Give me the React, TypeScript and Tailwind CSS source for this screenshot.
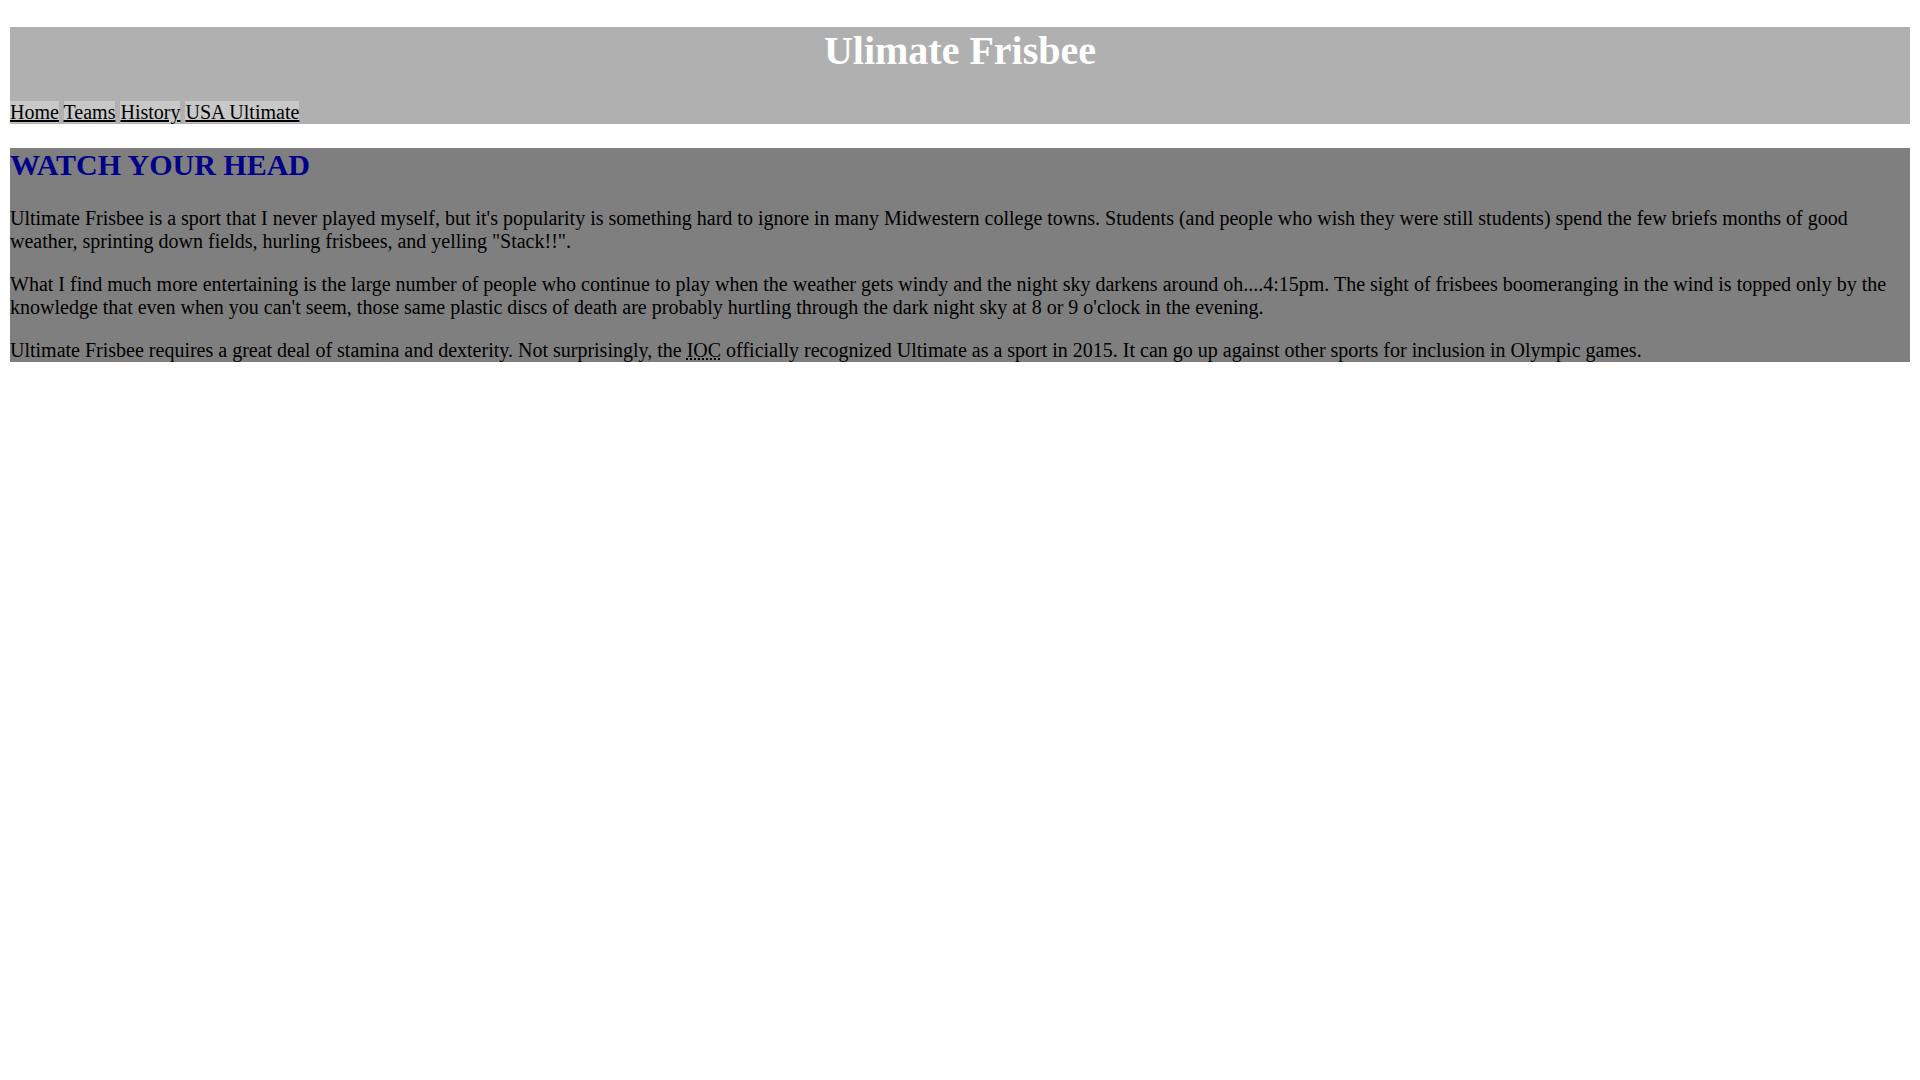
export default function App() {
  return (
    <div className="min-h-[1080px] bg-white px-[10px] pt-[27px] font-['Liberation_Serif',serif] text-[20px] text-black">
      <header className="bg-[#b0b0b0]">
        <h1 className="m-0 text-center text-[40px] font-bold leading-[48px] text-white">
          Ulimate Frisbee
        </h1>
        <nav className="mt-[26px] leading-[23px]">
          <a href="#" className="bg-[#c8c8c8] text-black underline">Home</a>{" "}
          <a href="#" className="bg-[#c8c8c8] text-black underline">Teams</a>{" "}
          <a href="#" className="bg-[#c8c8c8] text-black underline">History</a>{" "}
          <a href="#" className="bg-[#c8c8c8] text-black underline">USA Ultimate</a>
        </nav>
      </header>
      <main className="mt-[24px] bg-[#7f7f7f]">
        <h2 className="m-0 text-[30px] font-bold leading-[33px] text-[#00008b]">WATCH YOUR HEAD</h2>
        <p className="mt-[26px] leading-[23px]">
          Ultimate Frisbee is a sport that I never played myself, but it's popularity is something hard to ignore in many Midwestern college towns. Students (and people who wish they were still students) spend the few briefs months of good weather, sprinting down fields, hurling frisbees, and yelling "Stack!!".
        </p>
        <p className="mt-[20px] leading-[23px]">
          What I find much more entertaining is the large number of people who continue to play when the weather gets windy and the night sky darkens around oh....4:15pm. The sight of frisbees boomeranging in the wind is topped only by the knowledge that even when you can't seem, those same plastic discs of death are probably hurtling through the dark night sky at 8 or 9 o'clock in the evening.
        </p>
        <p className="mt-[20px] leading-[23px]">
          Ultimate Frisbee requires a great deal of stamina and dexterity. Not surprisingly, the{" "}
          <abbr title="International Olympic Committee" className="underline decoration-dotted">IOC</abbr>{" "}
          officially recognized Ultimate as a sport in 2015. It can go up against other sports for inclusion in Olympic games.
        </p>
      </main>
    </div>
  );
}
